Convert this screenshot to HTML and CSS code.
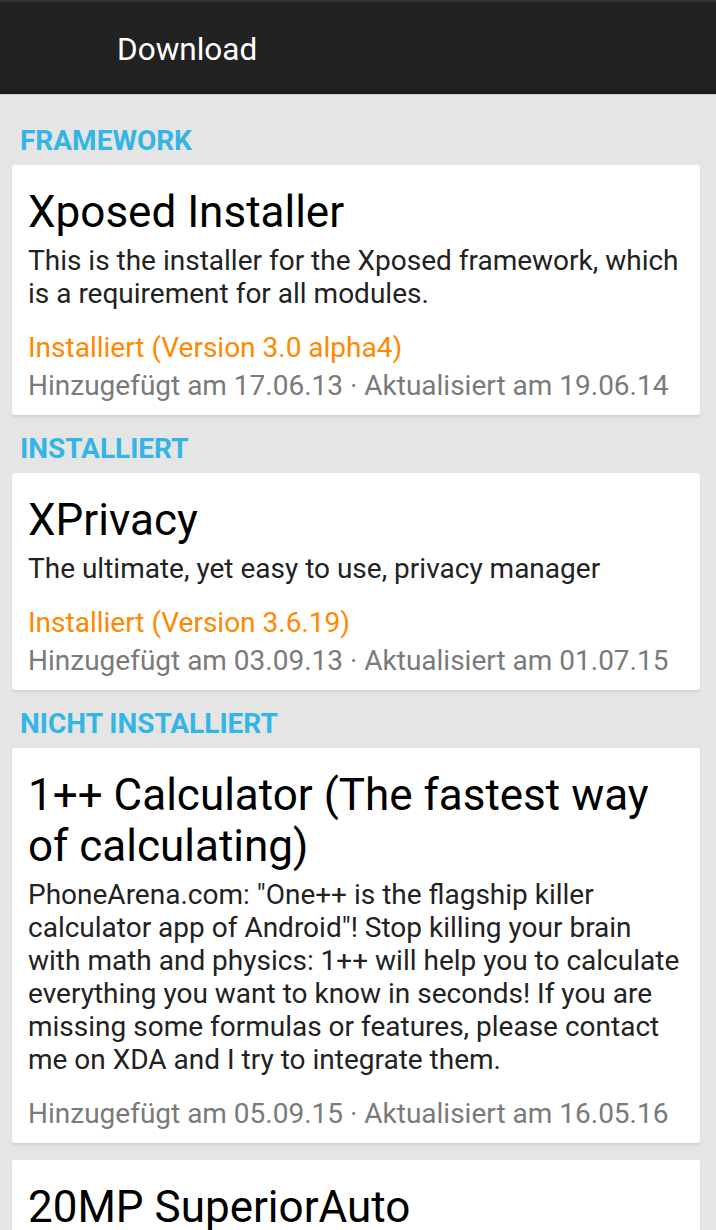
FILE: index.html
```html
<!DOCTYPE html>
<html>
<head>
<title>Download</title>
<link rel="stylesheet" href="styles.css">
</head>
<body>

<div class="toolbar">
    <div class="toolbar-title">Download</div>
</div>

<div class="content">
    <div class="section-title">FRAMEWORK</div>
    <div class="card">
        <div class="card-title">Xposed Installer</div>
        <div class="card-desc">This is the installer for the Xposed framework, which is a requirement for all modules.</div>
        <div class="card-status">Installiert (Version 3.0 alpha4)</div>
        <div class="card-meta">Hinzugefügt am 17.06.13 · Aktualisiert am 19.06.14</div>
    </div>

    <div class="section-title">INSTALLIERT</div>
    <div class="card">
        <div class="card-title">XPrivacy</div>
        <div class="card-desc">The ultimate, yet easy to use, privacy manager</div>
        <div class="card-status">Installiert (Version 3.6.19)</div>
        <div class="card-meta">Hinzugefügt am 03.09.13 · Aktualisiert am 01.07.15</div>
    </div>

    <div class="section-title">NICHT INSTALLIERT</div>
    <div class="card">
        <div class="card-title">1++ Calculator (The fastest way of calculating)</div>
        <div class="card-desc">PhoneArena.com: "One++ is the flagship killer calculator app of Android"! Stop killing your brain with math and physics: 1++ will help you to calculate everything you want to know in seconds! If you are missing some formulas or features, please contact me on XDA and I try to integrate them.</div>
        <div class="card-meta spaced">Hinzugefügt am 05.09.15 · Aktualisiert am 16.05.16</div>
    </div>
    <div class="card">
        <div class="card-title">20MP SuperiorAuto</div>
    </div>
</div>

</body>
</html>
```

FILE: styles.css
```css
html, body {
    margin: 0;
    padding: 0;
}
body {
    font-family: Roboto, "Noto Sans", sans-serif;
    background-color: #e5e5e5;
    overflow: hidden;
}
.toolbar {
    height: 92px;
    border-top: 2px solid #333;
    border-bottom: 1px solid #cbcbcb;
    background-color: #222;
    box-shadow: inset 0 -4px 3px -1px #181818;
    display: flex;
    align-items: center;
    padding-left: 117px;
    box-sizing: content-box;
}
.toolbar-title {
    color: #fff;
    font-size: 31.5px;
    padding-top: 2px;
}
.content {
    padding: 29px 16px 0 12px;
}
.section-title {
    color: #33b5e5;
    font-size: 28px;
    font-weight: bold;
    line-height: 33px;
    margin: 0 8px 8px;
}
.card + .section-title {
    margin-top: 17px;
}
.card {
    background-color: #fff;
    border-radius: 3px;
    box-shadow: 0 2px 2px rgba(0, 0, 0, 0.09);
    padding: 22px 16px 13px;
}
.card + .card {
    margin-top: 17px;
}
.card-title {
    color: #000;
    font-size: 44px;
    line-height: 51px;
}
.card-desc {
    color: #222;
    font-size: 28px;
    line-height: 33px;
    margin-top: 6px;
}
.card-status {
    color: #ff8800;
    font-size: 28px;
    line-height: 33px;
    margin-top: 21px;
}
.card-meta {
    color: #7a7a7a;
    font-size: 28px;
    line-height: 33px;
    margin-top: 5px;
}
.card-meta.spaced {
    margin-top: 21px;
}
```
